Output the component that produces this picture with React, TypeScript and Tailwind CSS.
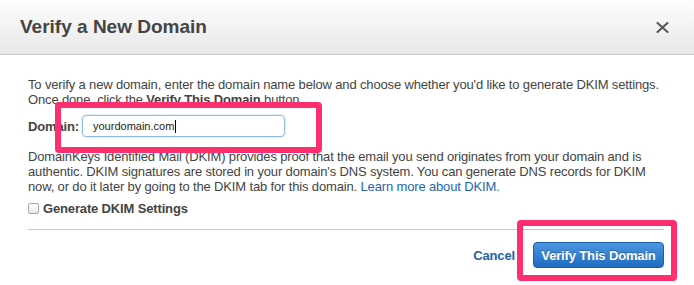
import React from "react";

const font = { fontFamily: '"Liberation Sans", Arial, sans-serif' };

const CloseIcon = () => (
  <svg width="13" height="11" viewBox="0 0 13 11" className="text-[#555]">
    <path d="M1.5 1L11.5 10M11.5 1L1.5 10" stroke="currentColor" strokeWidth="2" strokeLinecap="round" />
  </svg>
);

export default function App() {
  return (
    <div style={font} className="relative w-[694px] h-[285px] overflow-hidden bg-white text-[#444]">
      {/* header */}
      <div className="h-[55px] flex items-center justify-between pl-[20px] pr-[25px] bg-gradient-to-b from-[#fdfdfd] to-[#e8e8e8] border-b border-[#c9c9c9]">
        <h1 className="text-[19px] font-bold text-[#444]">Verify a New Domain</h1>
        <CloseIcon />
      </div>

      {/* body */}
      <div className="pl-[28px] pr-[30px] pt-[22px] text-[13px] leading-[15px] tracking-[-0.15px] whitespace-nowrap">
        <p>
          To verify a new domain, enter the domain name below and choose whether you'd like to generate DKIM settings.
          <br />
          Once done, click the <b>Verify This Domain</b> button.
        </p>

        <div className="mt-[8px] flex items-center h-[22px]">
          <span className="font-bold w-[54px]">Domain:</span>
          <div className="w-[203px] h-[22px] flex items-center pl-[10px] rounded-[4px] border border-[#8cb9e8] shadow-[0_0_2px_#a9cdf2] text-[#222] text-[11px] tracking-normal">
            yourdomain.com
            <span className="inline-block w-px h-[13px] bg-black ml-px" />
          </div>
        </div>

        <p className="mt-[12px]">
          DomainKeys Identified Mail (DKIM) provides proof that the email you send originates from your domain and is
          <br />
          authentic. DKIM signatures are stored in your domain's DNS system. You can generate DNS records for DKIM
          <br />
          now, or do it later by going to the DKIM tab for this domain.{" "}
          <a className="text-[#1f66b1]">Learn more about DKIM.</a>
        </p>

        <label className="mt-[7px] flex items-center font-bold">
          <span className="w-[11px] h-[11px] rounded-[2px] border border-[#a8a8a8] bg-gradient-to-b from-white to-[#e9e9e9] mr-[4px]" />
          Generate DKIM Settings
        </label>

        <div className="mt-[13px] border-t border-[#c9c9c9]" />

        <div className="mt-[12px] flex items-center justify-end gap-[18px]">
          <a className="font-bold text-[#2263aa]">Cancel</a>
          <button className="w-[131px] h-[26px] rounded-[4px] border border-[#1b5ea8] bg-gradient-to-b from-[#4b97e0] to-[#1e6bc1] text-white font-bold text-[13px] [text-shadow:0_-1px_0_rgba(0,0,0,0.25)]">
            Verify This Domain
          </button>
        </div>
      </div>

      {/* annotation boxes */}
      <div className="absolute left-[55px] top-[102px] w-[267px] h-[51px] border-[6px] border-[#ff2f6f] rounded-[4px]" />
      <div className="absolute left-[517px] top-[220px] w-[160px] h-[61px] border-[6px] border-[#ff2f6f] rounded-[4px]" />
    </div>
  );
}
